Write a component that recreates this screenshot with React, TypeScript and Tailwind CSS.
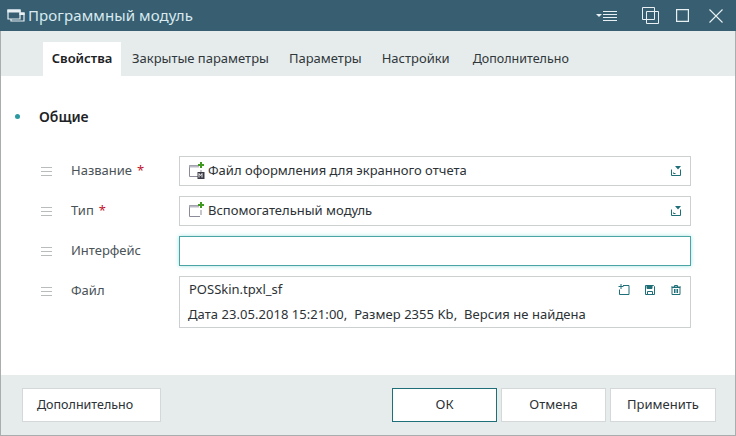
const font = { fontFamily: '"Noto Sans", sans-serif' };

function Grip() {
  return (
    <div className="w-[11px] flex flex-col gap-[3px] mt-[1px]">
      <div className="h-px bg-[#b8bcbc]" />
      <div className="h-px bg-[#b8bcbc]" />
      <div className="h-px bg-[#b8bcbc]" />
    </div>
  );
}

function Expand() {
  return (
    <svg width="12" height="12" viewBox="0 0 12 12" fill="none" stroke="#1f6f78" strokeWidth="1">
      <path d="M1.5 4.5v6h9v-6" />
      <path d="M3.5 7.5v1h2" />
      <path d="M5 1h6L8 4.5z" fill="#1f6f78" stroke="none" />
    </svg>
  );
}

function ModuleIcon({ badge }: { badge?: boolean }) {
  return (
    <svg width="18" height="18" viewBox="0 0 18 18" fill="none">
      <path d="M12 3.5H1.5v11H12" stroke="#8b8b9a" strokeWidth="1" />
      <path d="M1.5 3.5H11v2H1.5z" fill="#b9b9c4" />
      <path d="M13 13V8" stroke="#8b8b9a" strokeWidth="1" />
      <path d="M12 0h2v2h2v2h-2v2h-2V4h-2V2h2z" fill="#3f9a1f" />
      {badge && <rect x="9.5" y="10" width="7" height="7" fill="#3c3c46" />}
      {badge && <path d="M11 15.5v-4l1.5 2 1.5-2v4" stroke="#fff" strokeWidth="0.9" />}
    </svg>
  );
}

function Row({ label, required, children }: { label: string; required?: boolean; children: React.ReactNode }) {
  return (
    <div className="flex items-start">
      <div className="w-[30px] h-[30px] flex items-center"><Grip /></div>
      <div className="w-[108px] h-[30px] flex items-center text-[13px] text-[#4a5357]">
        {label}
        {required && <span className="text-[#c0142c] ml-[5px]">*</span>}
      </div>
      {children}
    </div>
  );
}

function Field({ text, badge }: { text: string; badge?: boolean }) {
  return (
    <div className="w-[512px] h-[30px] border border-[#cdd0d0] flex items-center pl-[8px] pr-[8px] text-[13px] text-[#2c3236]">
      <ModuleIcon badge={badge} />
      <span className="ml-[2px] flex-1">{text}</span>
      <Expand />
    </div>
  );
}

function Btn({ children, w, primary }: { children: React.ReactNode; w: string; primary?: boolean }) {
  return (
    <div className={w + " h-[34px] bg-white flex items-center justify-center text-[13px] text-[#2c3236] border " + (primary ? "border-[#1f6f78]" : "border-[#d5d8d8]")}>
      {children}
    </div>
  );
}

export default function App() {
  return (
    <div style={font} className="w-[736px] h-[436px] flex flex-col bg-white overflow-hidden">
      <div className="h-[31px] bg-[#375f71] flex items-center pl-[7px] pr-[13px] text-[#d9eaf0]">
        <svg width="18" height="16" viewBox="0 0 18 16" fill="none" stroke="#e8f0f3" strokeWidth="1.2">
          <path d="M1 2h12v9H1z" fill="#375f71" />
          <path d="M1 2h12v2H1z" fill="#e8f0f3" />
          <path d="M13 5h4v8H4v-2" />
          <path d="M13 5h4v1.5h-4z" fill="#e8f0f3" />
        </svg>
        <span className="ml-[3px] text-[15px] tracking-[0.1px] flex-1">Программный модуль</span>
        <svg width="24" height="12" viewBox="0 0 24 12" fill="none" stroke="#e8f0f3" strokeWidth="1" className="mr-[23px]">
          <path d="M1 4h6L4 7z" fill="#e8f0f3" stroke="none" />
          <path d="M8 1.5h14M8 4.5h14M8 7.5h14M8 10.5h14" />
        </svg>
        <svg width="17" height="17" viewBox="0 0 17 17" fill="none" stroke="#e8f0f3" strokeWidth="1" className="mr-[17px]">
          <path d="M.5.5h12v12H.5z" />
          <path d="M4.5 4.5h12v12h-12z" />
        </svg>
        <svg width="13" height="13" viewBox="0 0 13 13" fill="none" stroke="#e8f0f3" strokeWidth="1.2" className="mr-[20px]">
          <path d="M.6.6h11.8v11.8H.6z" />
        </svg>
        <svg width="14" height="14" viewBox="0 0 14 14" fill="none" stroke="#e8f0f3" strokeWidth="1.1">
          <path d="M.5.5l13 13M13.5.5l-13 13" />
        </svg>
      </div>

      <div className="flex-1 flex flex-col border-l border-r border-[#a9adad] border-b">
        <div className="h-[45px] bg-[#e6ecec] flex items-end pl-[42px] text-[13px] text-[#30373b]">
          <div className="h-[34px] w-[78px] bg-white flex items-center justify-center font-semibold text-[#1d2225]">Свойства</div>
          <div className="h-[34px] flex items-center ml-[11px]">Закрытые параметры</div>
          <div className="h-[34px] flex items-center ml-[20px]">Параметры</div>
          <div className="h-[34px] flex items-center ml-[20px]">Настройки</div>
          <div className="h-[34px] flex items-center ml-[23px] text-[12.5px]">Дополнительно</div>
        </div>

        <div className="flex-1 bg-white pl-[14px]">
          <div className="flex items-center h-[20px] mt-[30px]">
            <div className="w-[5px] h-[5px] rounded-full bg-[#2b9aa0]" />
            <div className="ml-[19px] text-[14px] font-semibold text-[#1d2225]">Общие</div>
          </div>
          <div className="mt-[30px] pl-[26px] flex flex-col gap-[10px]">
            <Row label="Название" required><Field text="Файл оформления для экранного отчета" badge /></Row>
            <Row label="Тип" required><Field text="Вспомогательный модуль" /></Row>
            <Row label="Интерфейс">
              <div className="w-[512px] h-[30px] border border-[#4ba5a5] shadow-[0_0_4px_#a5e0e0]" />
            </Row>
            <Row label="Файл">
              <div className="w-[512px] h-[52px] border border-[#cdd0d0] pl-[9px] pr-[8px] text-[13px] text-[#2c3236]">
                <div className="h-[25px] flex items-center">
                  <span className="flex-1">POSSkin.tpxl_sf</span>
                  <svg width="12" height="12" viewBox="0 0 12 12" fill="none" stroke="#1f6f78" className="mr-[14px]">
                    <path d="M5 1.5h6v9.000H1.500V5.500" /><path d="M3 0v5M.5 2.500h5" />
                  </svg>
                  <svg width="12" height="12" viewBox="0 0 12 12" fill="none" stroke="#1f6f78" className="mr-[14px]">
                    <path d="M1.5 1.5h8l1 1v8h-9z" /><path d="M3 1.5h5v3H3z" fill="#1f6f78" /><path d="M3.5 7.5h5v3h-5z" />
                  </svg>
                  <svg width="12" height="12" viewBox="0 0 12 12" fill="none" stroke="#1f6f78">
                    <path d="M1 3h10M4.5 3V1.5h3V3" /><path d="M2 3.5h8v7H2z" /><path d="M4.5 5v4M6 5v4M7.5 5v4" />
                  </svg>
                </div>
                <div className="h-[25px] flex items-center -ml-px tracking-[0.05px]">Дата 23.05.2018 15:21:00,&nbsp; Размер 2355 Kb,&nbsp; Версия не найдена</div>
              </div>
            </Row>
          </div>
        </div>

        <div className="h-[60px] bg-[#e6ecec] flex items-center pl-[21px] pr-[19px]">
          <div className="w-[139px] h-[34px] bg-white border border-[#d5d8d8] flex items-center pl-[14px] text-[12.5px] text-[#2c3236]">Дополнительно</div>
          <div className="flex-1" />
          <div className="flex gap-[4px]">
            <Btn w="w-[105px]" primary>ОК</Btn>
            <Btn w="w-[105px]">Отмена</Btn>
            <Btn w="w-[106px]">Применить</Btn>
          </div>
        </div>
      </div>
    </div>
  );
}
